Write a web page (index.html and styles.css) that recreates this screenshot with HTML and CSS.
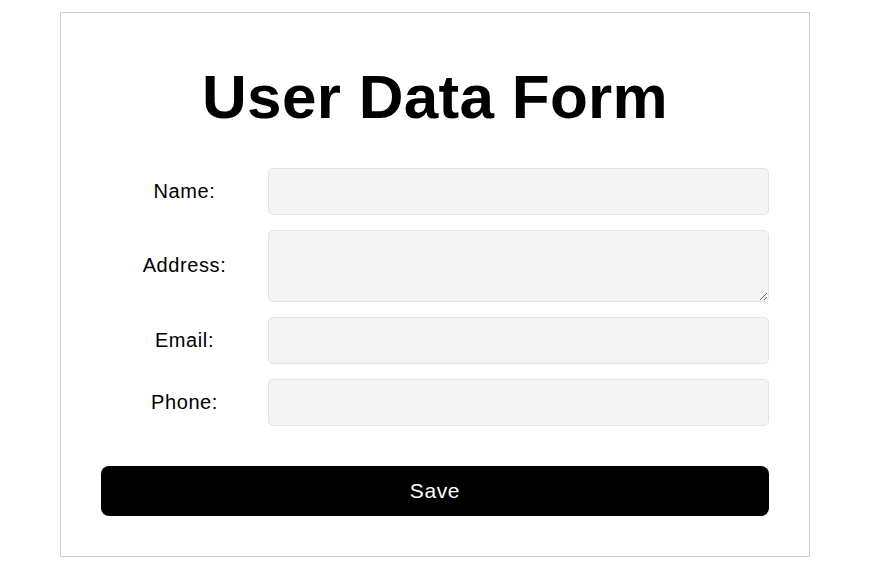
FILE: index.html
```html
<!DOCTYPE html>
<html lang="en">
<head>
<meta charset="utf-8">
<title>User Data Form</title>
<link rel="stylesheet" href="styles.css">
</head>
<body>
<form class="card">
  <h1 class="title">User Data Form</h1>
  <div class="fields">
    <label class="label" for="name">Name:</label>
    <input class="field" id="name" type="text">
    <label class="label" for="address">Address:</label>
    <textarea class="field area" id="address"></textarea>
    <label class="label" for="email">Email:</label>
    <input class="field" id="email" type="email">
    <label class="label" for="phone">Phone:</label>
    <input class="field" id="phone" type="tel">
  </div>
  <button class="save" type="button">Save</button>
</form>
</body>
</html>
```
FILE: styles.css
```css
html, body {
  margin: 0;
  padding: 0;
  background: #fff;
}
body {
  padding: 12px 0 0 60px;
  font-family: "Liberation Sans", Arial, sans-serif;
  color: #000;
}
.card {
  box-sizing: border-box;
  width: 750px;
  border: 1px solid #cfcfcf;
  padding: 40px 40px 40px 40px;
  display: flex;
  flex-direction: column;
}
.title {
  margin: 6px 0 33px 0;
  font-size: 62px;
  line-height: 76px;
  font-weight: 700;
  text-align: center;
  letter-spacing: 0.3px;
}
.fields {
  display: grid;
  grid-template-columns: 167px 1fr;
  row-gap: 15px;
  align-items: center;
}
.label {
  text-align: center;
  font-size: 20px;
  line-height: 22px;
  letter-spacing: 0.6px;
  padding-bottom: 2px;
}
.field {
  box-sizing: border-box;
  height: 47px;
  margin: 0;
  border: 1px solid #e3e3e3;
  border-radius: 5px;
  background: #f4f4f4;
  font: inherit;
  outline: none;
}
.area {
  height: 72px;
  display: block;
}
.save {
  margin-top: 40px;
  height: 50px;
  border: none;
  border-radius: 8px;
  background: #000;
  color: #fff;
  font-family: inherit;
  font-size: 21px;
  letter-spacing: 0.6px;
}
```
